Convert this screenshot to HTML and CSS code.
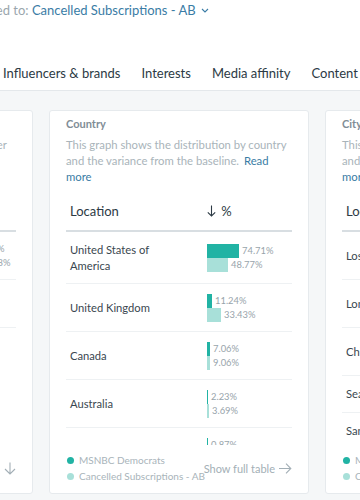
FILE: index.html
```html
<!DOCTYPE html>
<html lang="en">
<head>
  <meta charset="UTF-8">
  <title>Audience insights</title>
  <link rel="stylesheet" href="styles.css">
</head>
<body>
  <header class="top">
    <div class="compare">
      <span class="compare-label">Compared to:</span>
      <a class="compare-link" href="#">Cancelled Subscriptions - AB
        <svg class="chev" width="8" height="5" viewBox="0 0 8 5"><path d="M1 1l3 3 3-3" fill="none" stroke="#3a7ca5" stroke-width="1.1"/></svg>
      </a>
    </div>

    <!-- Tabs -->
    <nav class="tabs">
      <a href="#">Influencers &amp; brands</a>
      <a href="#">Interests</a>
      <a href="#">Media affinity</a>
      <a href="#">Content</a>
    </nav>
  </header>

  <main class="cards">
    <!-- Gender -->
    <section class="card">
      <h3 class="card-title">Gender</h3>
      <p class="desc">This graph shows the distribution by gender and the variance from the baseline. <a href="#">Read more</a></p>
      <div class="table-wrap">
        <table>
          <thead>
            <tr><th>Gender</th><th class="pct"><svg width="9" height="12" viewBox="0 0 9 12"><path d="M4.5 0.5v10.5M0.8 7.3l3.7 3.7 3.7-3.7" fill="none" stroke="#2c3a44" stroke-width="1.1"/></svg> %</th></tr>
          </thead>
          <tbody>
            <tr>
              <td>Female</td>
              <td class="bars">
                <div class="bar-line"><span class="bar dark" style="width:39px"></span><span class="val">54.12%</span></div>
                <div class="bar-line"><span class="bar light" style="width:45px"></span><span class="val">61.38%</span></div>
              </td>
            </tr>
            <tr>
              <td>Male</td>
              <td class="bars">
                <div class="bar-line"><span class="bar dark" style="width:30px"></span><span class="val">45.88%</span></div>
                <div class="bar-line"><span class="bar light" style="width:24px"></span><span class="val">38.62%</span></div>
              </td>
            </tr>
          </tbody>
        </table>
      </div>
      <div class="card-foot">
        <ul class="legend">
          <li><span class="dot dark"></span>MSNBC Democrats</li>
          <li><span class="dot light"></span>Cancelled Subscriptions - AB</li>
        </ul>
        <a class="more" href="#"><svg width="12" height="13" viewBox="0 0 12 13"><path d="M6 0.5v11.5M1 7l5 5 5-5" fill="none" stroke="#a3afb6" stroke-width="1.1"/></svg></a>
      </div>
    </section>

    <!-- Country -->
    <section class="card">
      <h3 class="card-title">Country</h3>
      <p class="desc">This graph shows the distribution by country and the variance from the baseline. <a href="#">Read more</a></p>
      <div class="table-wrap">
        <table>
          <thead>
            <tr><th>Location</th><th class="pct"><svg width="9" height="12" viewBox="0 0 9 12"><path d="M4.5 0.5v10.5M0.8 7.3l3.7 3.7 3.7-3.7" fill="none" stroke="#2c3a44" stroke-width="1.1"/></svg> %</th></tr>
          </thead>
          <tbody>
            <tr>
              <td>United States of America</td>
              <td class="bars">
                <div class="bar-line"><span class="bar dark" style="width:32px"></span><span class="val">74.71%</span></div>
                <div class="bar-line"><span class="bar light" style="width:21px"></span><span class="val">48.77%</span></div>
              </td>
            </tr>
            <tr>
              <td>United Kingdom</td>
              <td class="bars">
                <div class="bar-line"><span class="bar dark" style="width:5px"></span><span class="val">11.24%</span></div>
                <div class="bar-line"><span class="bar light" style="width:14px"></span><span class="val">33.43%</span></div>
              </td>
            </tr>
            <tr>
              <td>Canada</td>
              <td class="bars">
                <div class="bar-line"><span class="bar dark" style="width:3px"></span><span class="val">7.06%</span></div>
                <div class="bar-line"><span class="bar light" style="width:3px"></span><span class="val">9.06%</span></div>
              </td>
            </tr>
            <tr>
              <td>Australia</td>
              <td class="bars">
                <div class="bar-line"><span class="bar dark" style="width:1px"></span><span class="val">2.23%</span></div>
                <div class="bar-line"><span class="bar light" style="width:2px"></span><span class="val">3.69%</span></div>
              </td>
            </tr>
            <tr>
              <td>Germany</td>
              <td class="bars">
                <div class="bar-line"><span class="bar dark" style="width:1px"></span><span class="val">0.87%</span></div>
                <div class="bar-line"><span class="bar light" style="width:1px"></span><span class="val">1.12%</span></div>
              </td>
            </tr>
          </tbody>
        </table>
      </div>
      <div class="card-foot">
        <ul class="legend">
          <li><span class="dot dark"></span>MSNBC Democrats</li>
          <li><span class="dot light"></span>Cancelled Subscriptions - AB</li>
        </ul>
        <a class="more" href="#">Show full table <svg width="13" height="11" viewBox="0 0 13 11"><path d="M0 5.5h12M7 0.7l4.8 4.8L7 10.3" fill="none" stroke="#a3afb6" stroke-width="1.1"/></svg></a>
      </div>
    </section>

    <!-- City -->
    <section class="card">
      <h3 class="card-title">City</h3>
      <p class="desc">This graph shows the distribution by cities and the variance from the baseline. <a href="#">Read more</a></p>
      <div class="table-wrap">
        <table>
          <thead>
            <tr><th>Location</th><th class="pct"><svg width="9" height="12" viewBox="0 0 9 12"><path d="M4.5 0.5v10.5M0.8 7.3l3.7 3.7 3.7-3.7" fill="none" stroke="#2c3a44" stroke-width="1.1"/></svg> %</th></tr>
          </thead>
          <tbody>
            <tr>
              <td>Los Angeles</td>
              <td class="bars">
                <div class="bar-line"><span class="bar dark" style="width:9px"></span><span class="val">8.12%</span></div>
                <div class="bar-line"><span class="bar light" style="width:6px"></span><span class="val">5.40%</span></div>
              </td>
            </tr>
            <tr>
              <td>London</td>
              <td class="bars">
                <div class="bar-line"><span class="bar dark" style="width:4px"></span><span class="val">3.91%</span></div>
                <div class="bar-line"><span class="bar light" style="width:9px"></span><span class="val">8.77%</span></div>
              </td>
            </tr>
            <tr>
              <td>Chicago</td>
              <td class="bars">
                <div class="bar-line"><span class="bar dark" style="width:3px"></span><span class="val">3.02%</span></div>
                <div class="bar-line"><span class="bar light" style="width:2px"></span><span class="val">2.15%</span></div>
              </td>
            </tr>
            <tr class="short">
              <td>Seattle</td>
              <td class="bars">
                <div class="bar-line"><span class="bar dark" style="width:2px"></span><span class="val">1.96%</span></div>
              </td>
            </tr>
            <tr class="short">
              <td>San Francisco</td>
              <td class="bars">
                <div class="bar-line"><span class="bar dark" style="width:2px"></span><span class="val">1.74%</span></div>
              </td>
            </tr>
          </tbody>
        </table>
      </div>
      <div class="card-foot">
        <ul class="legend">
          <li><span class="dot dark"></span>MSNBC Democrats</li>
          <li><span class="dot light"></span>Cancelled Subscriptions - AB</li>
        </ul>
        <a class="more" href="#">Show full table</a>
      </div>
    </section>
  </main>
</body>
</html>
```

FILE: styles.css
```css
html, body {
  margin: 0;
  padding: 0;
}

body {
  width: 360px;
  height: 500px;
  overflow: hidden;
  background: #f5f7f8;
  color: #2c3a44;
  font-family: Lato, "Open Sans", sans-serif;
}

a {
  text-decoration: none;
}

.top {
  background: #fff;
}

.compare {
  margin-left: -49px;
  padding-top: 2px;
  height: 17px;
  font-size: 13px;
  line-height: 17px;
  white-space: nowrap;
}

.compare-label {
  color: #9aa6ad;
}

.compare-link {
  color: #3a7ca5;
}

.chev {
  margin-left: 2px;
  vertical-align: 2px;
}

.tabs {
  display: flex;
  gap: 21px;
  margin-top: 46px;
  padding: 0 3px 8px;
  border-bottom: 1px solid #e4e8eb;
  white-space: nowrap;
}

.tabs a {
  color: #2c3a44;
  font-size: 13px;
  line-height: 17px;
}

.cards {
  display: flex;
  gap: 16px;
  margin-left: -227px;
  padding-top: 19px;
}

.card {
  flex: 0 0 260px;
  min-width: 0;
  box-sizing: border-box;
  height: 384px;
  padding: 5px 16px 9px;
  background: #fff;
  border: 1px solid #e6eaed;
  border-radius: 3px;
  display: flex;
  flex-direction: column;
  overflow: hidden;
}

.card-title {
  margin: 0;
  font-size: 11px;
  line-height: 15px;
  font-weight: bold;
  color: #7f8d96;
}

.desc {
  margin: 6px 0 0;
  font-size: 11.3px;
  line-height: 16px;
  color: #a9b4ba;
}

.desc a {
  color: #3a7ca5;
  margin-left: 2px;
}

.table-wrap {
  margin-top: 9px;
  height: 251px;
  overflow: hidden;
}

table {
  width: 100%;
  table-layout: fixed;
  border-collapse: collapse;
}

th {
  height: 33px;
  padding: 0 4px 3px;
  text-align: left;
  font-weight: normal;
  font-size: 13px;
  color: #2c3a44;
  border-bottom: 2px solid #d8dee2;
}

th.pct {
  width: 81px;
}

th svg {
  vertical-align: -1px;
  margin-right: 2px;
}

td {
  padding: 10px 4px 9px;
  font-size: 11.2px;
  line-height: 16px;
  color: #3a4750;
  border-bottom: 1px solid #eef1f3;
}

td:first-child {
  padding-right: 40px;
}

tr.short td {
  padding: 10px 4px;
}

.bar-line {
  display: flex;
  align-items: center;
  height: 14px;
}

.bar {
  display: block;
  flex: none;
  height: 14px;
  min-width: 1px;
}

.bar.dark,
.dot.dark {
  background: #21b3a4;
}

.bar.light,
.dot.light {
  background: #a8e0d9;
}

.val {
  margin-left: 3px;
  font-size: 9.4px;
  color: #98a4ab;
  white-space: nowrap;
}

.card-foot {
  margin-top: auto;
  display: flex;
  align-items: center;
  justify-content: space-between;
  gap: 6px;
}

.legend {
  list-style: none;
  margin: 0;
  padding: 0;
  min-width: 0;
}

.legend li {
  display: flex;
  align-items: center;
  font-size: 10px;
  line-height: 16px;
  color: #a9b4ba;
  white-space: nowrap;
}

.dot {
  flex: none;
  width: 7px;
  height: 7px;
  border-radius: 50%;
  margin: 0 5px 0 1px;
}

.more {
  display: flex;
  align-items: center;
  gap: 4px;
  font-size: 11px;
  color: #a3afb6;
  white-space: nowrap;
}
```
